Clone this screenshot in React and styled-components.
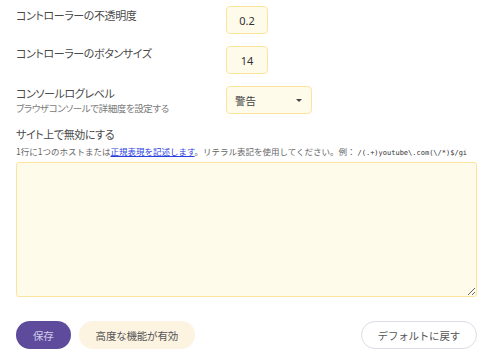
import React from "react";
import styled, { createGlobalStyle } from "styled-components";

const GlobalStyle = createGlobalStyle`
  body {
    margin: 0;
    background: #fff;
    font-family: "Noto Sans CJK JP", "Noto Sans", sans-serif;
    color: #4a4a4a;
  }
`;

const Page = styled.div`
  width: 500px;
  padding: 6px 24px 0 16px;
  box-sizing: border-box;
`;

const Row = styled.div`
  display: flex;
  align-items: flex-start;
  margin-bottom: 12px;
`;

const LabelBox = styled.div`
  width: 210px;
  padding-top: ${(p) => p.$top || 0}px;
`;

const Label = styled.div`
  font-size: 11px;
  line-height: 15px;
  letter-spacing: -0.4px;
  color: #4a4a4a;
  font-feature-settings: "palt";
`;

const Sub = styled.div`
  font-size: 9.5px;
  line-height: 14px;
  letter-spacing: -0.4px;
  color: #7a7a7a;
  font-feature-settings: "palt";
`;

const NumInput = styled.input`
  width: 42px;
  height: 28px;
  box-sizing: border-box;
  background: #fffbeb;
  border: 1.5px solid #fde49c;
  border-radius: 4px;
  text-align: center;
  font-family: "Noto Sans", sans-serif;
  font-size: 11px;
  color: #333;
  outline: none;
`;

const Select = styled.div`
  width: 86px;
  height: 28px;
  box-sizing: border-box;
  background: #fffbeb;
  border: 1.5px solid #fde49c;
  border-radius: 4px;
  display: flex;
  align-items: center;
  justify-content: space-between;
  padding: 0 9px 0 8px;
  font-size: 10.5px;
  color: #444;
`;

const Caret = styled.span`
  width: 0;
  height: 0;
  border-left: 3px solid transparent;
  border-right: 3px solid transparent;
  border-top: 3px solid #444;
`;

const Section = styled.div`
  margin-top: 10px;
`;

const Desc = styled.div`
  font-size: 8.5px;
  line-height: 14px;
  color: #666;
  margin-top: 2px;
  white-space: nowrap;
  a {
    color: #2a3fe0;
    text-decoration: underline;
  }
  code {
    font-family: "DejaVu Sans Mono", monospace;
    font-size: 7px;
    color: #333;
  }
`;

const TextArea = styled.textarea`
  display: block;
  width: 461px;
  height: 135px;
  box-sizing: border-box;
  margin-top: 2px;
  background: #fffbeb;
  border: 1.5px solid #fde49c;
  border-radius: 3px;
  outline: none;
  resize: both;
`;

const Footer = styled.div`
  display: flex;
  align-items: center;
  gap: 8px;
  margin-top: 24px;
  width: 461px;
`;

const Button = styled.button`
  height: 28px;
  border-radius: 14px;
  padding: 0 ${(p) => p.$pad || 14}px;
  font-family: "Noto Sans CJK JP", sans-serif;
  font-size: 10.5px;
  letter-spacing: -0.2px;
  border: ${(p) => (p.$variant === "outline" ? "1px solid #dddbe6" : "none")};
  background: ${(p) =>
    p.$variant === "primary" ? "#5e4b9c" : p.$variant === "tonal" ? "#fdf3e1" : "#fff"};
  color: ${(p) => (p.$variant === "primary" ? "#d4cceb" : "#555")};
  margin-left: ${(p) => (p.$push ? "auto" : "0")};
`;

export default function App() {
  return (
    <Page>
      <GlobalStyle />
      <Row>
        <LabelBox $top={2}>
          <Label>コントローラーの不透明度</Label>
        </LabelBox>
        <NumInput defaultValue="0.2" />
      </Row>
      <Row>
        <LabelBox $top={0}>
          <Label>コントローラーのボタンサイズ</Label>
        </LabelBox>
        <NumInput defaultValue="14" />
      </Row>
      <Row>
        <LabelBox $top={0}>
          <Label>コンソールログレベル</Label>
          <Sub>ブラウザコンソールで詳細度を設定する</Sub>
        </LabelBox>
        <Select>
          <span>警告</span>
          <Caret />
        </Select>
      </Row>
      <Section>
        <Label>サイト上で無効にする</Label>
        <Desc>
          1行に1つのホストまたは<a href="#">正規表現を記述します</a>。リテラル表記を使用してください。例：{" "}
          <code>/(.+)youtube\.com(\/*)$/gi</code>
        </Desc>
        <TextArea />
      </Section>
      <Footer>
        <Button $variant="primary" $pad={17}>保存</Button>
        <Button $variant="tonal" $pad={17}>高度な機能が有効</Button>
        <Button $variant="outline" $push $pad={16}>デフォルトに戻す</Button>
      </Footer>
    </Page>
  );
}
